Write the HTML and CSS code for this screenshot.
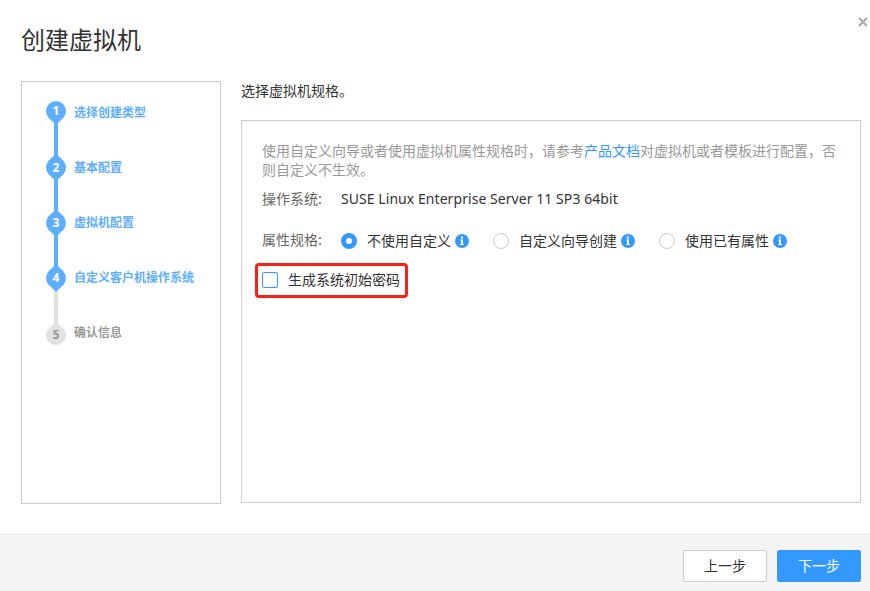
FILE: index.html
```
<!DOCTYPE html>
<html lang="zh-CN">
<head>
<meta charset="utf-8">
<title>创建虚拟机</title>
<link rel="stylesheet" href="styles.css">
</head>
<body>
<div class="dialog">
  <header class="header">
    <h1 class="title">创建虚拟机</h1>
    <button class="close" aria-label="关闭"><svg width="10" height="10" viewBox="0 0 10 10"><path d="M1 1L9 9M9 1L1 9"/></svg></button>
  </header>
  <main class="content">
    <nav class="steps">
      <svg class="rail" width="20" height="244" viewBox="0 0 20 244">
        <path class="rail-todo" d="M8 186H12V221Q12.500 224 15 225.500H5Q7.500 224 8 221Z"/>
        <circle class="rail-todo" cx="10" cy="234" r="10"/>
        <path class="rail-done" d="M8 15H12V184H8Z"/>
        <g class="rail-done">
          <circle cx="10" cy="10" r="10"/><path d="M2.500 16.500L8 22H12L17.500 16.500Z"/>
          <circle cx="10" cy="66.500" r="10"/><path d="M2.500 60L8 54.500H12L17.500 60V73L12 78.500H8L2.500 73Z"/>
          <circle cx="10" cy="122" r="10"/><path d="M2.500 115.500L8 110H12L17.500 115.500V128.500L12 134H8L2.500 128.500Z"/>
          <circle cx="10" cy="177" r="10"/><path d="M2.500 170.500L8 165H12L17.500 170.500V183.500L10 191L2.500 183.500Z"/>
        </g>
        <g class="rail-num">
          <text x="10" y="14">1</text>
          <text x="10" y="71">2</text>
          <text x="10" y="126">3</text>
          <text x="10" y="181">4</text>
          <text class="num-todo" x="10" y="238">5</text>
        </g>
      </svg>
      <ol class="step-list">
        <li>选择创建类型</li>
        <li>基本配置</li>
        <li>虚拟机配置</li>
        <li>自定义客户机操作系统</li>
        <li class="todo">确认信息</li>
      </ol>
    </nav>
    <section class="main">
      <p class="prompt">选择虚拟机规格。</p>
      <div class="panel">
        <p class="hint">使用自定义向导或者使用虚拟机属性规格时，请参考<a class="link">产品文档</a>对虚拟机或者模板进行配置，否则自定义不生效。</p>
        <div class="row row-os">
          <span class="label">操作系统:</span>
          <span class="os-name">SUSE Linux Enterprise Server 11 SP3 64bit</span>
        </div>
        <div class="row row-spec">
          <span class="label">属性规格:</span>
          <label class="option"><span class="radio checked"></span><span class="text">不使用自定义</span><svg class="info" width="14" height="14" viewBox="0 0 14 14"><circle cx="7" cy="7" r="7"/><path d="M6 2.500H8V4.500H6ZM5 5.500H8V10H9V11H5V10H6V6.500H5Z"/></svg></label>
          <label class="option"><span class="radio"></span><span class="text">自定义向导创建</span><svg class="info" width="14" height="14" viewBox="0 0 14 14"><circle cx="7" cy="7" r="7"/><path d="M6 2.500H8V4.500H6ZM5 5.500H8V10H9V11H5V10H6V6.500H5Z"/></svg></label>
          <label class="option"><span class="radio"></span><span class="text">使用已有属性</span><svg class="info" width="14" height="14" viewBox="0 0 14 14"><circle cx="7" cy="7" r="7"/><path d="M6 2.500H8V4.500H6ZM5 5.500H8V10H9V11H5V10H6V6.500H5Z"/></svg></label>
        </div>
        <label class="password"><span class="checkbox"></span><span class="text">生成系统初始密码</span></label>
      </div>
    </section>
  </main>
  <footer class="footer">
    <button class="btn">上一步</button>
    <button class="btn primary">下一步</button>
  </footer>
</div>
</body>
</html>
```
FILE: styles.css
```
* { box-sizing: border-box; }
body, h1, p, ol { margin: 0; padding: 0; }
body {
  background: #fff;
  color: #333;
  font: 14px/20px "Noto Sans CJK SC", sans-serif;
}
.dialog { display: flex; flex-direction: column; height: 591px; overflow: hidden; }
.header { display: flex; justify-content: space-between; height: 81px; padding: 17px 2px 0 21px; }
.title { font-size: 24px; font-weight: 400; line-height: 44px; }
.close { display: flex; width: 10px; height: 10px; padding: 0; border: 0; background: none; }
.close path { stroke: #aaa; stroke-width: 2.2; fill: none; }

.content { display: flex; gap: 20px; height: 453px; padding: 0 9px 0 21px; }
.steps { display: flex; gap: 8px; width: 200px; height: 423px; padding: 19px 0 0 24px; border: 1px solid #ccc; }
.rail { flex: none; }
.rail-todo { fill: #e1e1e1; }
.rail-done { fill: #5eaeff; }
.rail-num { fill: #fff; font: bold 12px "Open Sans", sans-serif; text-anchor: middle; }
.num-todo { fill: #999; }
.step-list { list-style: none; color: #5eaeff; font-size: 12px; font-weight: 700; white-space: nowrap; }
.step-list li { height: 55px; line-height: 22px; }
.step-list .todo { color: #999; }

.main { width: 620px; }
.prompt { height: 39px; line-height: 18px; }
.panel { height: 383px; padding: 20px; border: 1px solid #ccc; }
.hint { height: 48px; color: #999; line-height: 19px; }
.link { color: #39f; }
.row { display: flex; align-items: center; height: 20px; }
.label { width: 79px; padding-bottom: 2px; color: #666; }
.row-spec .label { padding-bottom: 4px; }
.os-name { font-family: "Noto Sans", sans-serif; letter-spacing: 0.06px; white-space: nowrap; }
.row-spec { margin-top: 22px; }
.option { display: flex; align-items: center; margin-right: 24px; white-space: nowrap; }
.text { padding-bottom: 2px; }
.radio { width: 16px; height: 16px; margin-right: 10px; border: 1px solid #ccc; border-radius: 50%; }
.radio.checked { border: 5px solid #39f; }
.info { margin: 0 0 1px 4px; }
.info circle { fill: #39f; }
.info path { fill: #fff; }
.password {
  display: flex;
  align-items: center;
  width: 153px;
  height: 35px;
  margin: 12px 0 0 -7px;
  padding: 0 0 2px 4px;
  border: 3px solid #fb2016;
  border-radius: 4px;
  white-space: nowrap;
}
.checkbox { width: 16px; height: 16px; margin-right: 10px; border: 1px solid #39f; border-radius: 2px; }

.footer {
  display: flex;
  justify-content: flex-end;
  gap: 10px;
  height: 57px;
  padding: 15px 9px 0 0;
  border-top: 1px solid #e9e9e9;
  background: #f4f4f4;
}
.btn {
  width: 84px;
  height: 32px;
  padding: 0 0 2px;
  border: 1px solid #ccc;
  border-radius: 2px;
  background: #fff;
  color: #333;
  font: inherit;
}
.btn.primary { border-color: #39f; background: #39f; color: #fff; }
```
